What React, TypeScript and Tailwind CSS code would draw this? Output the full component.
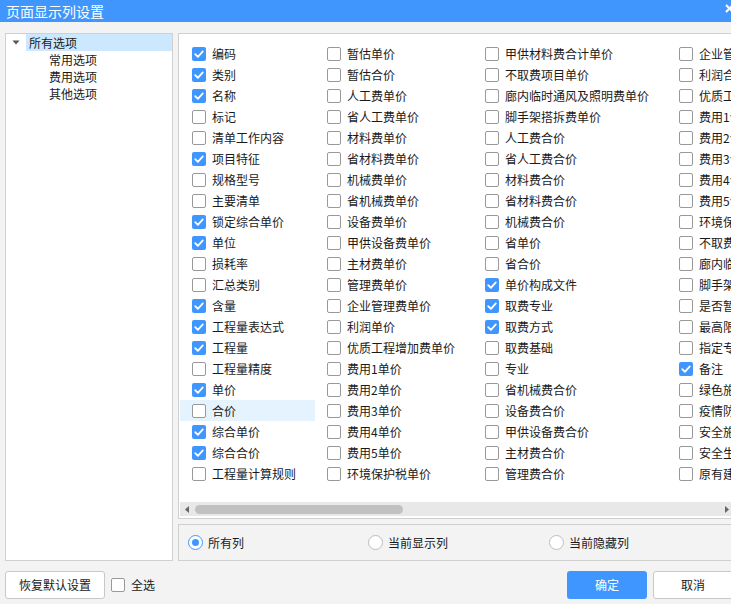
import React from "react";

type Item = [string, boolean];

const col1: Item[] = [
  ["编码", true], ["类别", true], ["名称", true], ["标记", false], ["清单工作内容", false],
  ["项目特征", true], ["规格型号", false], ["主要清单", false], ["锁定综合单价", true], ["单位", true],
  ["损耗率", false], ["汇总类别", false], ["含量", true], ["工程量表达式", true], ["工程量", true],
  ["工程量精度", false], ["单价", true], ["合价", false], ["综合单价", true], ["综合合价", true],
  ["工程量计算规则", false],
];
const col2: Item[] = [
  ["暂估单价", false], ["暂估合价", false], ["人工费单价", false], ["省人工费单价", false], ["材料费单价", false],
  ["省材料费单价", false], ["机械费单价", false], ["省机械费单价", false], ["设备费单价", false], ["甲供设备费单价", false],
  ["主材费单价", false], ["管理费单价", false], ["企业管理费单价", false], ["利润单价", false], ["优质工程增加费单价", false],
  ["费用1单价", false], ["费用2单价", false], ["费用3单价", false], ["费用4单价", false], ["费用5单价", false],
  ["环境保护税单价", false],
];
const col3: Item[] = [
  ["甲供材料费合计单价", false], ["不取费项目单价", false], ["廊内临时通风及照明费单价", false], ["脚手架搭拆费单价", false], ["人工费合价", false],
  ["省人工费合价", false], ["材料费合价", false], ["省材料费合价", false], ["机械费合价", false], ["省单价", false],
  ["省合价", false], ["单价构成文件", true], ["取费专业", true], ["取费方式", true], ["取费基础", false],
  ["专业", false], ["省机械费合价", false], ["设备费合价", false], ["甲供设备费合价", false], ["主材费合价", false],
  ["管理费合价", false],
];
const col4: Item[] = [
  ["企业管理费合价", false], ["利润合价", false], ["优质工程增加费合价", false], ["费用1合价", false], ["费用2合价", false],
  ["费用3合价", false], ["费用4合价", false], ["费用5合价", false], ["环境保护税合价", false], ["不取费项目合价", false],
  ["廊内临时通风及照明费合价", false], ["脚手架搭拆费合价", false], ["是否暂估", false], ["最高限价", false], ["指定专业章节位置", false],
  ["备注", true], ["绿色施工安全防护措施费", false], ["疫情防控费", false], ["安全施工费", false], ["安全生产费", false],
  ["原有建筑物拆除", false],
];

function Box({ checked }: { checked: boolean }) {
  if (checked) {
    return (
      <span className="w-[14px] h-[14px] shrink-0 rounded-[2px] bg-[#4096ff] flex items-center justify-center">
        <svg width="14" height="14" viewBox="0 0 14 14">
          <polyline points="3.2,7.2 5.9,9.8 10.8,4.4" fill="none" stroke="#fff" strokeWidth="1.8" strokeLinecap="round" strokeLinejoin="round" />
        </svg>
      </span>
    );
  }
  return <span className="w-[14px] h-[14px] shrink-0 rounded-[2px] border border-[#999999] bg-white" />;
}

function Radio({ checked }: { checked: boolean }) {
  return checked ? (
    <span className="w-[15px] h-[15px] rounded-full border border-[#4096ff] bg-white flex items-center justify-center">
      <span className="w-[7px] h-[7px] rounded-full bg-[#4096ff]" />
    </span>
  ) : (
    <span className="w-[15px] h-[15px] rounded-full border border-[#bdbdbd] bg-white" />
  );
}

function Cell({ item, hover }: { item: Item; hover?: boolean }) {
  return (
    <div className={"flex items-center gap-[6px] pl-[12px] whitespace-nowrap overflow-hidden " + (hover ? "bg-[#e5f3ff]" : "")}>
      <Box checked={item[1]} />
      <span className="leading-[21px]">{item[0]}</span>
    </div>
  );
}

export default function App() {
  return (
    <div className="w-[731px] h-[604px] overflow-hidden bg-[#f3f3f3] flex flex-col text-[12px] text-[#1a1a1a] font-['Noto_Sans_CJK_SC','Microsoft_YaHei',sans-serif]">
      {/* title */}
      <div className="h-[22px] shrink-0 bg-[#4096fd] flex items-center pl-[6px] text-white">
        <span className="text-[14px] leading-[22px]">页面显示列设置</span>
        <svg className="ml-auto mr-[-3px] mt-[-6px]" width="9" height="9" viewBox="0 0 9 9">
          <path d="M1 1L8 8M8 1L1 8" stroke="#fff" strokeWidth="2" />
        </svg>
      </div>

      {/* body */}
      <div className="flex gap-[5px] pl-[5px] pt-[11px]">
        {/* tree */}
        <div className="w-[168px] h-[528px] shrink-0 bg-white border border-[#d0d0d0] flex flex-col">
          <div className="h-[17px] flex items-center">
            <span className="w-[20px] flex justify-center">
              <svg width="8" height="5" viewBox="0 0 8 5"><path d="M0.5 0.5H7.5L4 4.5Z" fill="#555" /></svg>
            </span>
            <div className="flex-1 h-full bg-[#cce8ff] pl-[3px] leading-[17px]">所有选项</div>
          </div>
          <div className="h-[17px] pl-[43px] leading-[17px]">常用选项</div>
          <div className="h-[17px] pl-[43px] leading-[17px]">费用选项</div>
          <div className="h-[17px] pl-[43px] leading-[17px]">其他选项</div>
        </div>

        {/* right */}
        <div className="w-[560px] shrink-0 flex flex-col">
          <div className="h-[486px] bg-white border border-[#d0d0d0] flex flex-col overflow-hidden">
            <div className="flex-1 pt-[9px] pl-[1px] overflow-hidden">
              <div className="grid grid-flow-col grid-rows-[repeat(21,21px)] grid-cols-[135px_158px_194px_220px] w-max">
                {col1.map((it) => <Cell key={"a" + it[0]} item={it} hover={it[0] === "合价"} />)}
                {col2.map((it) => <Cell key={"b" + it[0]} item={it} />)}
                {col3.map((it) => <Cell key={"c" + it[0]} item={it} />)}
                {col4.map((it) => <Cell key={"d" + it[0]} item={it} />)}
              </div>
            </div>
            <div className="h-[14px] mb-[2px] ml-[1px] bg-[#e8e8e8] flex items-center">
              <svg className="ml-[5px]" width="4" height="7" viewBox="0 0 4 7"><path d="M4 0V7L0 3.5Z" fill="#666" /></svg>
              <div className="ml-[6px] w-[208px] h-[9px] rounded-full bg-[#c1c1c1]" />
              <svg className="ml-auto mr-[8px]" width="4" height="7" viewBox="0 0 4 7"><path d="M0 0V7L4 3.5Z" fill="#666" /></svg>
            </div>
          </div>

          <div className="mt-[5px] h-[37px] border border-[#d0d0d0] flex items-center pl-[9px]">
            <div className="w-[180px] flex items-center gap-[5px]">
              <Radio checked />
              <span>所有列</span>
            </div>
            <div className="w-[181px] flex items-center gap-[5px]">
              <Radio checked={false} />
              <span>当前显示列</span>
            </div>
            <div className="flex items-center gap-[5px]">
              <Radio checked={false} />
              <span>当前隐藏列</span>
            </div>
          </div>
        </div>
      </div>

      {/* bottom */}
      <div className="flex items-center pl-[5px] mt-[10px]">
        <button className="w-[100px] h-[28px] bg-white border border-[#c8c8c8] rounded-[3px] text-[12px] text-[#1a1a1a]">恢复默认设置</button>
        <div className="ml-[6px] flex items-center gap-[6px]">
          <Box checked={false} />
          <span>全选</span>
        </div>
        <div className="ml-auto mr-[-2px] flex gap-[6px]">
          <button className="w-[80px] h-[28px] bg-[#4096ff] rounded-[3px] text-white text-[12px]">确定</button>
          <button className="w-[80px] h-[28px] bg-white border border-[#c8c8c8] rounded-[3px] text-[12px] text-[#1a1a1a]">取消</button>
        </div>
      </div>
    </div>
  );
}
